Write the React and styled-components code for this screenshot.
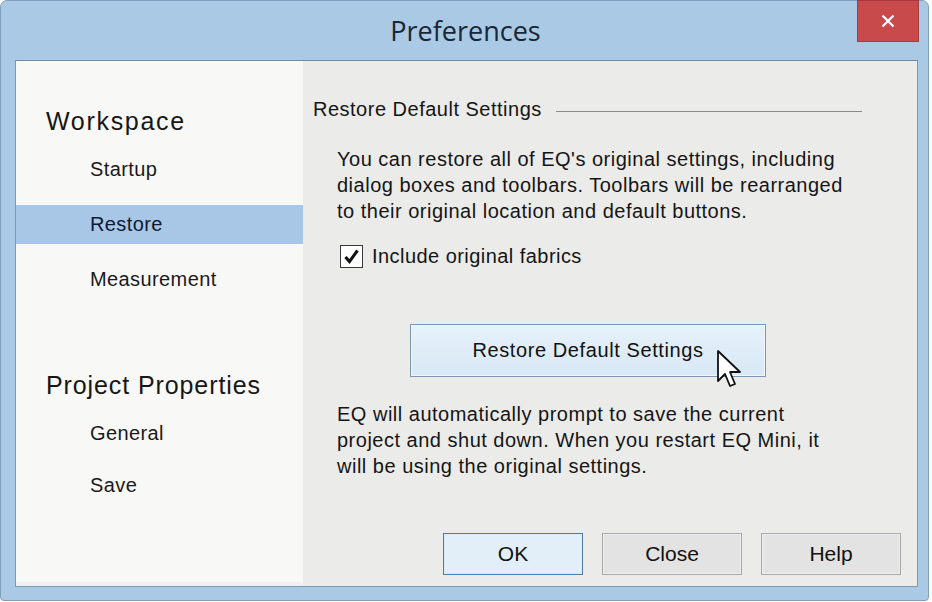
import React from "react";
import styled, { createGlobalStyle } from "styled-components";

const Global = createGlobalStyle`
  html, body { margin: 0; padding: 0; background: #ffffff; }
  body { font-family: "Liberation Sans", Arial, sans-serif; }
  * { box-sizing: border-box; }
`;

const Window = styled.div`
  width: 929px;
  height: 601px;
  background: #a9c9e4;
  border: 1px solid #7f9fbd;
  border-radius: 7px 7px 4px 4px;
  display: flex;
  flex-direction: column;
  padding: 0 10px 13px 14px;
`;

const TitleBar = styled.div`
  height: 59px;
  display: grid;
  grid-template-columns: 1fr auto 1fr;
  align-items: start;
`;

const Title = styled.div`
  grid-column: 2;
  margin-top: 13px;
  margin-left: -2px;
  font-family: "Open Sans", "Noto Sans", sans-serif;
  font-size: 27px;
  letter-spacing: 0px;
  color: #1b2636;
  line-height: 34px;
`;

const CloseButton = styled.div`
  grid-column: 3;
  justify-self: end;
  margin-top: -1px;
  margin-right: -1px;
  width: 62px;
  height: 42px;
  background: #c84a4a;
  display: flex;
  align-items: center;
  justify-content: center;
  border: 1px solid #a83b3e;
`;

const Client = styled.div`
  flex: 1;
  display: flex;
  border: 1px solid #7d98b6;
  border-top-color: #6f8aa8;
`;

const Sidebar = styled.div`
  width: 287px;
  background: #f8f8f7;
  border-bottom: 4px solid #f0eff3;
  padding-top: 40px;
  display: flex;
  flex-direction: column;
`;

const NavHeading = styled.div`
  height: 40px;
  line-height: 40px;
  padding-left: 30px;
  font-size: 25px;
  letter-spacing: ${(p) => p.$spacing ?? 1.1}px;
  color: #161616;
  margin-top: ${(p) => p.$top || 0}px;
`;

const NavItem = styled.div`
  height: 39px;
  line-height: 39px;
  padding-left: 74px;
  font-size: 20px;
  letter-spacing: 0.4px;
  color: ${(p) => (p.$active ? "#0e1a33" : "#1a1a1a")};
  background: ${(p) => (p.$active ? "#a8c6e6" : "transparent")};
  margin-top: ${(p) => p.$top || 0}px;
`;

const Content = styled.div`
  flex: 1;
  background: #ebebea;
  display: flex;
  flex-direction: column;
  padding: 34px 16px 11px 10px;
`;

const GroupHeader = styled.div`
  display: flex;
  align-items: center;
  gap: 14px;
  padding-right: 39px;
  font-size: 20px;
  letter-spacing: 0.5px;
  color: #151515;
  height: 28px;
`;

const Rule = styled.div`
  flex: 1;
  height: 1px;
  background: #8a8a8a;
  margin-top: 4px;
`;

const Body = styled.div`
  padding-left: 24px;
  display: flex;
  flex-direction: column;
`;

const Para = styled.p`
  margin: ${(p) => p.$top || 0}px 0 0 0;
  font-size: 20px;
  line-height: 26px;
  letter-spacing: 0.5px;
  color: #151515;
`;

const CheckRow = styled.label`
  display: flex;
  align-items: center;
  gap: 9px;
  margin-top: 19px;
  margin-left: 3px;
  font-size: 20px;
  letter-spacing: 0.45px;
  color: #151515;
  height: 26px;
`;

const CheckBox = styled.span`
  width: 23px;
  height: 23px;
  border: 1px solid #3a3a3a;
  background: #ffffff;
  display: flex;
  align-items: center;
  justify-content: center;
`;

const BigButtonWrap = styled.div`
  position: relative;
  align-self: flex-start;
  margin-top: 55px;
  margin-left: 73px;
`;

const BigButton = styled.div`
  width: 356px;
  height: 53px;
  border: 1px solid #7a96b2;
  background: linear-gradient(#e6f1fa, #d8e8f5);
  display: flex;
  align-items: center;
  justify-content: center;
  font-size: 20px;
  letter-spacing: 0.6px;
  color: #111;
  box-shadow: inset 0 0 0 1px #f1f7fc;
`;

const Cursor = styled.svg`
  position: absolute;
  left: 306px;
  top: 25px;
`;

const Footer = styled.div`
  margin-top: auto;
  display: flex;
  justify-content: flex-end;
  gap: 19px;
`;

const DlgButton = styled.div`
  width: 140px;
  height: 42px;
  display: flex;
  align-items: center;
  justify-content: center;
  font-size: 21px;
  color: #111;
  border: 1px solid ${(p) => (p.$default ? "#4b7fae" : "#a8a8a8")};
  background: ${(p) => (p.$default ? "#e3eff8" : "#e3e3e3")};
  box-shadow: inset 0 0 0 1px ${(p) => (p.$default ? "#d6ebf8" : "#efefef")};
`;

export default function App() {
  return (
    <>
      <Global />
      <Window>
        <TitleBar>
          <Title>Preferences</Title>
          <CloseButton>
            <svg width="16" height="16" viewBox="0 0 16 16">
              <path d="M2.5 2.5 L13.5 13.5 M13.5 2.5 L2.5 13.5" stroke="#fff" strokeWidth="2.2" />
            </svg>
          </CloseButton>
        </TitleBar>
        <Client>
          <Sidebar>
            <NavHeading $spacing={1.7}>Workspace</NavHeading>
            <NavItem $top={9}>Startup</NavItem>
            <NavItem $top={16} $active>Restore</NavItem>
            <NavItem $top={16}>Measurement</NavItem>
            <NavHeading $top={66} $spacing={0.9}>Project Properties</NavHeading>
            <NavItem $top={9}>General</NavItem>
            <NavItem $top={13}>Save</NavItem>
          </Sidebar>
          <Content>
            <GroupHeader>
              Restore Default Settings
              <Rule />
            </GroupHeader>
            <Body>
              <Para $top={23}>
                You can restore all of EQ's original settings, including
                <br />
                dialog boxes and toolbars. Toolbars will be rearranged
                <br />
                to their original location and default buttons.
              </Para>
              <CheckRow>
                <CheckBox>
                  <svg width="17" height="17" viewBox="0 0 17 17">
                    <path d="M2.5 9 L6.5 13.5 L14.5 2.5" fill="none" stroke="#111" strokeWidth="3" />
                  </svg>
                </CheckBox>
                Include original fabrics
              </CheckRow>
              <BigButtonWrap>
                <BigButton>Restore Default Settings</BigButton>
                <Cursor width="28" height="44" viewBox="0 0 28 44">
                  <path
                    d="M2 2 L2 32 L9 25 L14 37 L19 35 L14 23 L24 23 Z"
                    fill="#fff"
                    stroke="#111"
                    strokeWidth="1.8"
                    strokeLinejoin="round"
                  />
                </Cursor>
              </BigButtonWrap>
              <Para $top={24}>
                EQ will automatically prompt to save the current
                <br />
                project and shut down. When you restart EQ Mini, it
                <br />
                will be using the original settings.
              </Para>
            </Body>
            <Footer>
              <DlgButton $default>OK</DlgButton>
              <DlgButton>Close</DlgButton>
              <DlgButton>Help</DlgButton>
            </Footer>
          </Content>
        </Client>
      </Window>
    </>
  );
}
